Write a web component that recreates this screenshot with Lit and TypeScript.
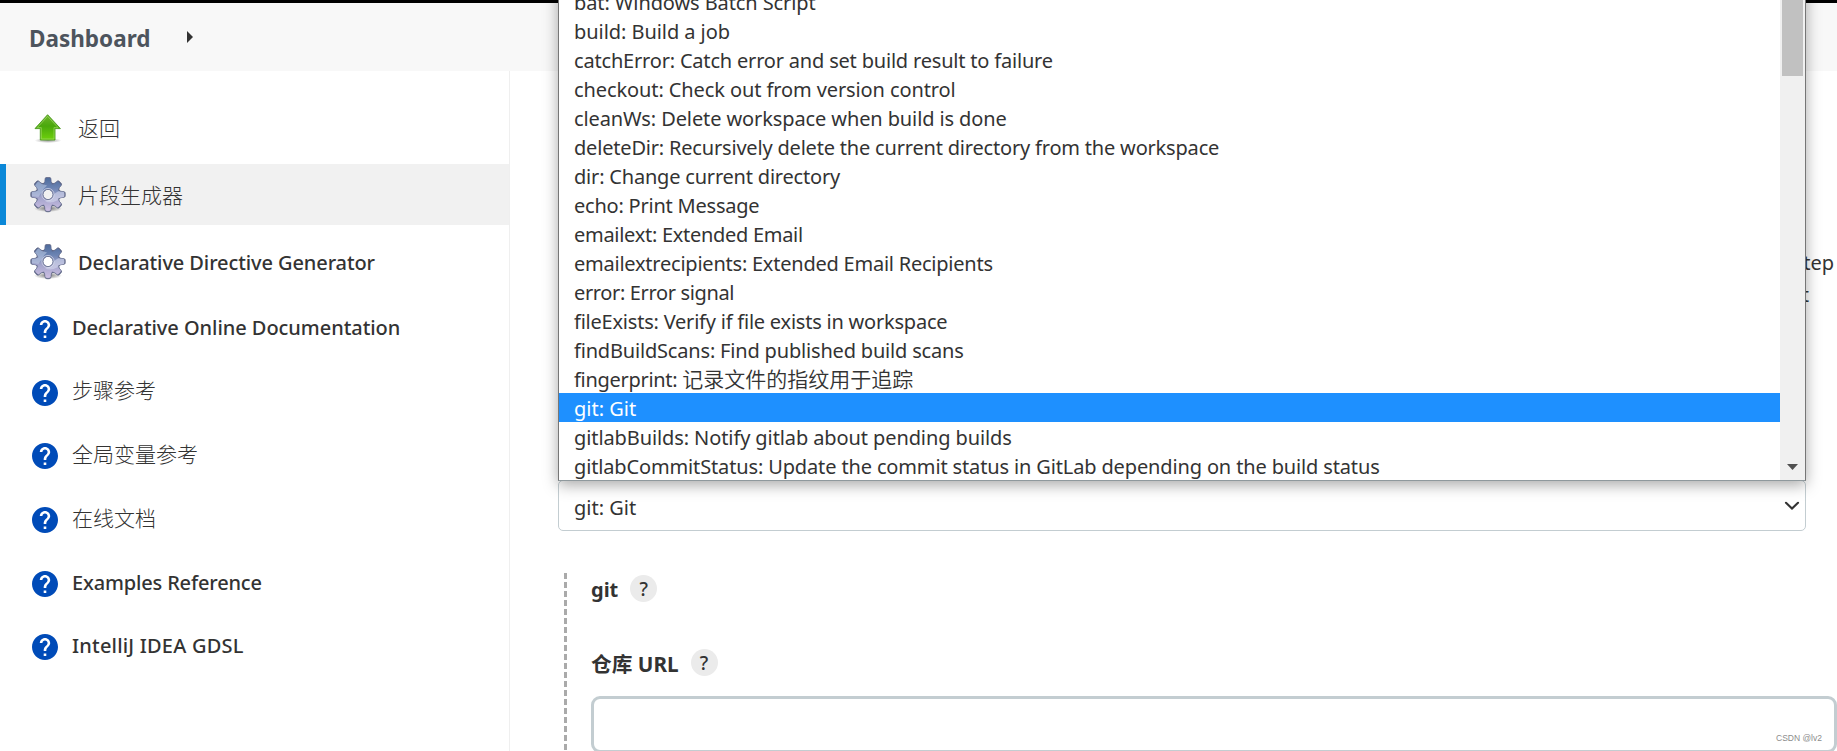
import { LitElement, html, css, svg } from "lit";
import { customElement } from "lit/decorators.js";
import { classMap } from "lit/directives/class-map.js";
import { styleMap } from "lit/directives/style-map.js";

type Task = { icon: "up" | "gear" | "help"; label: string; cjk?: boolean; active?: boolean; track?: number };
type Step = { name: string; title: string; track: number; cjk?: boolean };

const TASKS: Task[] = [
  { icon: "up", label: "返回", cjk: true },
  { icon: "gear", label: "片段生成器", cjk: true, active: true },
  { icon: "gear", label: "Declarative Directive Generator", track: -0.1 },
  { icon: "help", label: "Declarative Online Documentation", track: -0.05 },
  { icon: "help", label: "步骤参考", cjk: true },
  { icon: "help", label: "全局变量参考", cjk: true },
  { icon: "help", label: "在线文档", cjk: true },
  { icon: "help", label: "Examples Reference", track: -0.16 },
  { icon: "help", label: "IntelliJ IDEA GDSL", track: 0.2 },
];

const STEPS: Step[] = [
  { name: "bat", title: "Windows Batch Script", track: -0.1 },
  { name: "build", title: "Build a job", track: -0.06 },
  { name: "catchError", title: "Catch error and set build result to failure", track: -0.19 },
  { name: "checkout", title: "Check out from version control", track: -0.1 },
  { name: "cleanWs", title: "Delete workspace when build is done", track: -0.11 },
  { name: "deleteDir", title: "Recursively delete the current directory from the workspace", track: -0.19 },
  { name: "dir", title: "Change current directory", track: -0.2 },
  { name: "echo", title: "Print Message", track: -0.22 },
  { name: "emailext", title: "Extended Email", track: -0.29 },
  { name: "emailextrecipients", title: "Extended Email Recipients", track: -0.23 },
  { name: "error", title: "Error signal", track: -0.36 },
  { name: "fileExists", title: "Verify if file exists in workspace", track: -0.22 },
  { name: "findBuildScans", title: "Find published build scans", track: -0.18 },
  { name: "fingerprint", title: "记录文件的指纹用于追踪", track: -0.3, cjk: true },
  { name: "git", title: "Git", track: 0 },
  { name: "gitlabBuilds", title: "Notify gitlab about pending builds", track: -0.1 },
  { name: "gitlabCommitStatus", title: "Update the commit status in GitLab depending on the build status", track: -0.14 },
];

const px = (n: number) => `${n}px`;

/* One tooth of an eight-toothed gear centred on (18,17.5). */
const tooth = "M13.6 7 Q15.3 5 15.2 1.2 Q15.4 .2 18 .2 Q20.6 .2 20.8 1.2 Q20.7 5 22.4 7 Z";
const gearTeeth = [0, 45, 90, 135, 180, 225, 270, 315];

const upIcon = html`<svg viewBox="0 0 36 36" width="36" height="36">
  <defs>
    <linearGradient id="g" x1="0" y1="0" x2="0" y2="1">
      <stop offset="0" stop-color="#6fb52c" /><stop offset=".45" stop-color="#4aa80c" /><stop offset="1" stop-color="#6fd20c" />
    </linearGradient>
    <radialGradient id="s"><stop offset="0" stop-color="#000" stop-opacity=".4" /><stop offset="1" stop-color="#000" stop-opacity="0" /></radialGradient>
  </defs>
  <ellipse cx="18" cy="30.5" rx="13.5" ry="2.6" fill="url(#s)" />
  <path d="M17.6 4.7 L30.4 18.6 H25 V30 H10.3 V18.6 H5 Z" fill="url(#g)" stroke="#4c9a20" stroke-width=".9" stroke-linejoin="round" />
  <path d="M17.6 6.3 L28 17.6 H24 V29 H11.3 V17.6 H7.3 Z" fill="none" stroke="#a5dc6c" stroke-width=".9" opacity=".7" />
</svg>`;

const gearIcon = html`<svg viewBox="0 0 36 36" width="36" height="36">
  <defs>
    <linearGradient id="m" x1="0" y1="0" x2="0" y2="35" gradientUnits="userSpaceOnUse">
      <stop offset="0" stop-color="#4f6c9c" /><stop offset=".3" stop-color="#6b83b2" /><stop offset=".6" stop-color="#a3a4cc" /><stop offset="1" stop-color="#cdbfe2" />
    </linearGradient>
    <radialGradient id="sh"><stop offset="0" stop-color="#000" stop-opacity=".55" /><stop offset="1" stop-color="#000" stop-opacity="0" /></radialGradient>
    <mask id="shape" maskUnits="userSpaceOnUse" x="-2" y="-2" width="40" height="40">
      <g fill="#fff">
        <circle cx="18" cy="17.5" r="11.4" />
        ${gearTeeth.map((a) => svg`<path d=${tooth} transform="rotate(${a} 18 17.5)" />`)}
      </g>
      <circle cx="18" cy="17.5" r="5" fill="#000" />
    </mask>
    <mask id="hole"><rect width="36" height="36" fill="#fff" /><circle cx="18" cy="17.5" r="4.9" fill="#000" /></mask>
  </defs>
  <ellipse cx="18" cy="31.5" rx="14" ry="3.6" fill="url(#sh)" />
  <g mask="url(#hole)" fill="#5f6788" stroke="#5f6788" stroke-width=".8" stroke-linejoin="round">
    <circle cx="18" cy="17.5" r="11.9" />
    ${gearTeeth.map((a) => svg`<path d=${tooth} transform="rotate(${a} 18 17.5)" />`)}
  </g>
  <g mask="url(#shape)" transform="translate(.9 .875) scale(.95)">
    <rect width="36" height="36" fill="url(#m)" />
    <path d="M1 12 L8 3 L14 7 L17 8 Q13 11 12 15 Q9 17 8 20 L1 19 Z" fill="#c3d2ea" opacity=".5" />
    <path d="M36 14 H29 Q24 16 22.5 21 Q20 24 15 25 Q22 27 27 24 L36 20Z" fill="#d9dcf0" opacity=".55" />
  </g>
  <circle cx="18" cy="17.5" r="5.2" fill="none" stroke="#6f7795" stroke-width="1" />
  <circle cx="18" cy="17.5" r="6.1" fill="none" stroke="#dfe3f2" stroke-width=".8" opacity=".8" />
</svg>`;

const helpIcon = html`<svg viewBox="2 2 20 20" width="26" height="26">
  <path fill="#004bb8" d="M12 2C6.48 2 2 6.48 2 12s4.48 10 10 10 10-4.48 10-10S17.52 2 12 2zm1 17h-2v-2h2v2zm2.07-7.75l-.9.92C13.45 12.9 13 13.5 13 15h-2v-.5c0-1.1.45-2.1 1.17-2.83l1.24-1.26c.37-.36.59-.86.59-1.41 0-1.1-.9-2-2-2s-2 .9-2 2H8c0-2.21 1.79-4 4-4s4 1.79 4 4c0 .88-.36 1.68-.93 2.25z" />
</svg>`;

@customElement("side-panel")
export class SidePanel extends LitElement {
  static styles = css`
    :host { display: block; width: 509px; flex: none; border-right: 1px solid #efefef; padding-top: 26px; }
    .list { display: flex; flex-direction: column; }
    .task { display: flex; align-items: center; height: 61px; margin-bottom: 6px; padding-left: 24px; border-left: 6px solid transparent; color: #333; gap: 12px; }
    .task.active { background: #f1f1f1; border-left-color: #0b88d8; }
    .task.help { height: 61.7px; margin-bottom: 2px; padding-left: 26px; gap: 14px; }
    .label { font-size: 20px; font-weight: 500; line-height: 28px; white-space: nowrap; padding-top: 2px; }
    .help .label { padding: 0 0 2px; }
    .label.cjk { font-family: "Noto Sans CJK SC", sans-serif; font-weight: 300; font-size: 21px; padding: 0 0 2px; }
    .help .label.cjk { padding: 0 0 6.4px; }
    svg { display: block; flex: none; }
  `;
  render() {
    return html`<nav class="list">
      ${TASKS.map(
        (t) => html`<div class=${classMap({ task: true, active: !!t.active, help: t.icon === "help" })}>
          ${t.icon === "up" ? upIcon : t.icon === "gear" ? gearIcon : helpIcon}
          <span class=${classMap({ label: true, cjk: !!t.cjk })} style=${styleMap({ letterSpacing: px(t.track ?? 0) })}>${t.label}</span>
        </div>`
      )}
    </nav>`;
  }
}

@customElement("step-select")
export class StepSelect extends LitElement {
  static styles = css`
    :host { display: block; position: relative; width: 1248px; height: 51px; }
    .box { box-sizing: border-box; height: 51px; border: 1px solid #c3cdd1; border-radius: 5px; background: #fff; display: flex; align-items: center; justify-content: space-between; padding: 3px 5px 0 15px; }
    .box svg { margin-top: -3px; }
    .popup { position: absolute; left: 0; bottom: 50px; box-sizing: border-box; width: 1248px; height: 495px; display: flex; border: 1px solid #767676; border-bottom-color: #8f999d; background: #fff; box-shadow: 0 4px 14px rgba(0, 0, 0, .34); }
    .options { flex: 1; }
    .option { height: 29px; line-height: 31px; padding-left: 15px; white-space: nowrap; }
    .option.on { background: #1e90ff; color: #fff; }
    .cjk { font-family: "Noto Sans CJK SC", sans-serif; font-size: 21px; font-weight: 350; line-height: 1; letter-spacing: 0; }
    .scroll { width: 25px; background: #f0f0f0; display: flex; flex-direction: column; justify-content: space-between; align-items: center; }
    .thumb { width: 21px; height: 89px; background: #c1c1c1; }
    .arrow { margin-bottom: 10px; width: 11px; height: 6px; background: #505050; clip-path: polygon(0 0, 100% 0, 50% 100%); }
  `;
  render() {
    return html`<div class="box">
        <span>git: Git</span>
        <svg width="16" height="10" viewBox="0 0 16 10"><path d="M2 1.8 L8 7.6 L14 1.8" fill="none" stroke="#333" stroke-width="2.1" stroke-linecap="round" /></svg>
      </div>
      <div class="popup">
        <div class="options">
          ${STEPS.map(
            (s) => html`<div class=${classMap({ option: true, on: s.name === "git" })} style=${styleMap({ letterSpacing: px(s.track) })}>${s.name}: ${s.cjk ? html`<span class="cjk">${s.title}</span>` : s.title}</div>`
          )}
        </div>
        <div class="scroll"><div class="thumb"></div><div class="arrow"></div></div>
      </div>`;
  }
}

@customElement("app-root")
export class AppRoot extends LitElement {
  static styles = css`
    :host { display: flex; flex-direction: column; width: 100%; height: 751px; overflow: hidden; position: relative; background: #fff; color: #333; font-family: "Noto Sans", "Noto Sans CJK SC", sans-serif; font-size: 20px; }
    .top { height: 3px; flex: none; background: #000; }
    .crumbs { height: 68px; flex: none; background: #f8f8f8; display: flex; align-items: center; padding-left: 29px; gap: 37px; }
    .crumb { font-size: 22.5px; font-weight: 700; color: #4d545d; line-height: 30px; padding-top: 3px; }
    .caret { border: 6px solid transparent; border-left: 6px solid #333; border-right: 0; }
    .body { display: flex; flex: 1; min-height: 0; }
    .main { flex: 1; min-width: 0; padding-left: 48px; display: flex; flex-direction: column; }
    .intro { height: 409px; box-sizing: border-box; padding: 175px 3px 0 0; flex: none; text-align: right; line-height: 33px; }
    .second { padding-right: 25px; line-height: 31px; }
    .form { margin: 42px 0 0 6px; display: flex; gap: 24px; height: 178px; }
    .rail { width: 3px; background: repeating-linear-gradient(#aaa 0 6px, #fff 6px 9px); }
    .fields { flex: 1; display: flex; flex-direction: column; }
    .name { display: flex; align-items: center; gap: 12px; height: 27px; margin-top: 2px; font-weight: 700; white-space: nowrap; }
    .name.url { margin-top: 47px; font-size: 20.7px; }
    .text { padding-top: 2px; }
    .url .text { padding: 0; }
    .q { width: 27px; height: 27px; border-radius: 50%; background: #ebebeb; text-align: center; line-height: 28px; font-weight: 500; font-size: 19px; }
    .input { box-sizing: border-box; height: 57px; margin-top: 20px; border: 3px solid #c3cdd1; border-radius: 9px; flex: none; display: flex; align-items: flex-end; justify-content: flex-end; padding: 0 12px 5px 0; }
    .mark { font-family: "Liberation Sans", Arial, sans-serif; font-size: 8.5px; line-height: 14px; color: #8c8c8c; }
  `;
  render() {
    return html`<div class="top"></div>
      <header class="crumbs"><span class="crumb">Dashboard</span><span class="caret"></span></header>
      <div class="body">
        <side-panel></side-panel>
        <main class="main">
          <div class="intro"><div>step</div><div class="second">it</div></div>
          <step-select></step-select>
          <section class="form">
            <div class="rail"></div>
            <div class="fields">
              <div class="name"><span class="text">git</span><span class="q">?</span></div>
              <div class="name url"><span class="text">仓库 URL</span><span class="q">?</span></div>
              <div class="input"><span class="mark">CSDN @lv2</span></div>
            </div>
          </section>
        </main>
      </div>`;
  }
}
